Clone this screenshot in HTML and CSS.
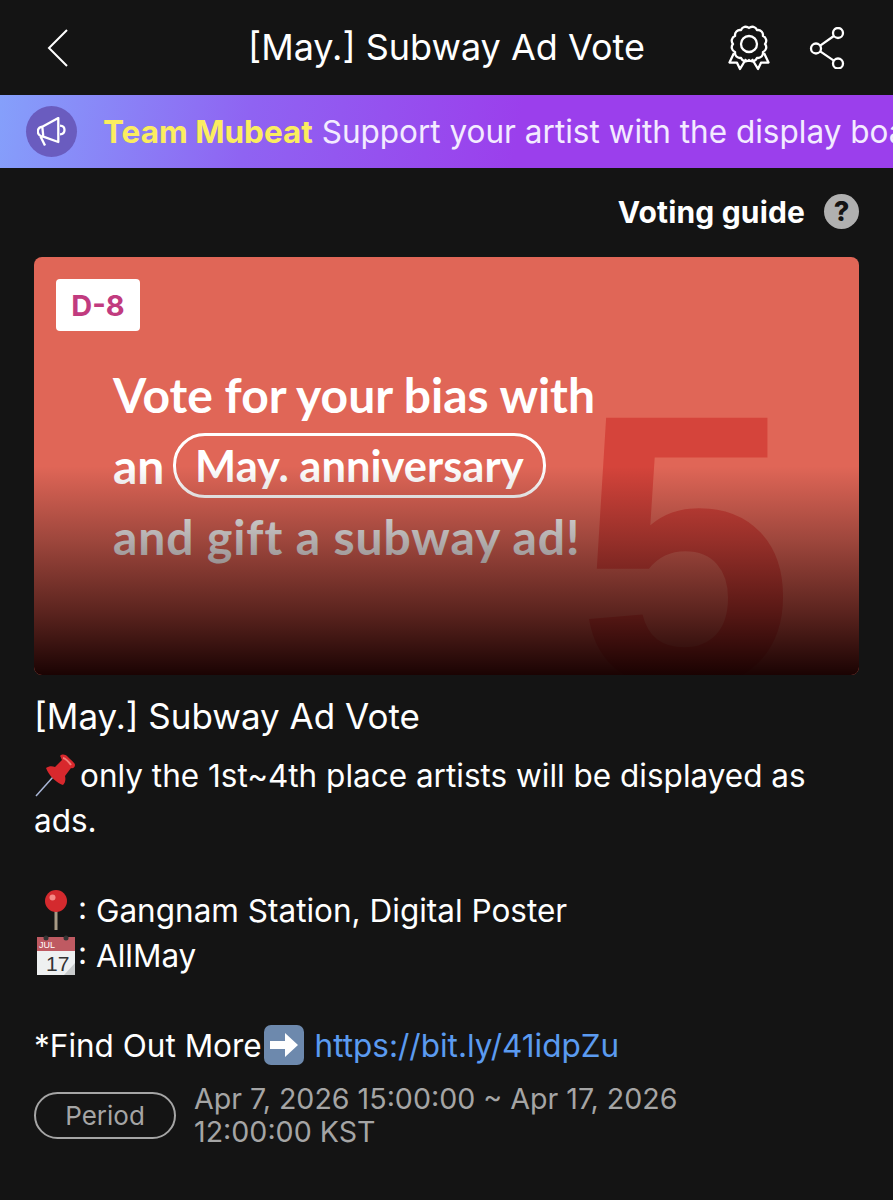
FILE: index.html
```html
<!DOCTYPE html>
<html lang="en">
<head>
    <meta charset="UTF-8">
    <meta name="viewport" content="width=device-width, initial-scale=1.0">
    <title>[May.] Subway Ad Vote</title>
    <link rel="stylesheet" href="styles.css">
</head>
<body>
    <div class="header">
        <svg class="back" width="24" height="40" viewBox="0 0 24 40"><path d="M21 2 3 20l18 18"/></svg>
        <h1 class="header-title">[May.] Subway Ad Vote</h1>
        <div class="header-icons">
            <svg class="badge-icon" width="42" height="46" viewBox="0 0 42 46">
                <path d="M21 3A5 5 0 0 1 29 5.100 5 5 0 0 1 34.900 11 5 5 0 0 1 37 19 5 5 0 0 1 34.900 27 5 5 0 0 1 29 32.900 5 5 0 0 1 21 35 5 5 0 0 1 13 32.900 5 5 0 0 1 7.100 27 5 5 0 0 1 5 19 5 5 0 0 1 7.100 11 5 5 0 0 1 13 5.100 5 5 0 0 1 21 3z"/>
                <circle cx="21" cy="19" r="8"/>
                <path d="M6 28 1.500 37.500l7.500.2 3 6.300 6-10M36 28l4.500 9.500-7.500.2-3 6.300-6-10"/>
            </svg>
            <svg class="share-icon" width="38" height="42" viewBox="0 0 38 42">
                <circle cx="30" cy="6" r="5"/>
                <circle cx="8" cy="21.500" r="5"/>
                <circle cx="30" cy="36.500" r="5"/>
                <path d="M12.200 18.600 25.800 9M12.200 24.400 25.800 33.600"/>
            </svg>
        </div>
    </div>

    <div class="notice">
        <span class="notice-circle">
            <svg width="30" height="30" viewBox="0 0 30 30"><path d="M5.300 9.700 21.300 1v24L6.300 19.700zM5.300 9.700C-.8 11-.8 18.500 6.300 19.700M3.500 19.500 8 28.500M23 8.700c6 .3 6 8.300 0 8.600"/></svg>
        </span>
        <p class="notice-text"><b>Team Mubeat</b> Support your artist with the display board</p>
    </div>

    <div class="guide">
        <span class="guide-label">Voting guide</span>
        <span class="guide-help">?</span>
    </div>

    <div class="banner">
        <span class="banner-five">5</span>
        <div class="banner-copy">
            <div>Vote for your bias with</div>
            <div class="banner-line">an <span class="pill">May. anniversary</span></div>
            <div class="banner-last">and gift a subway ad!</div>
        </div>
        <div class="banner-shade"></div>
        <span class="dday">D-8</span>
    </div>

    <div class="content">
        <h2 class="vote-title">[May.] Subway Ad Vote</h2>
        <p class="vote-line">
            <svg class="emoji pushpin" width="44" height="44" viewBox="0 0 44 44">
                <path d="M2 43 19 24" stroke="#a9b6d6" stroke-width="1.500"/>
                <path d="M26 3c2-2 5-2 8 1s7 6 7 8-2 4-4 3l-6 8c1 4 0 7-2 9-5-1-14-9-17-17 3-2 6-2 9-1l7-7c-1-2-1-3-2-4z" fill="#d8282d"/>
                <path d="M29 5c2 0 6 4 8 7" stroke="#f17c78" stroke-width="2" fill="none"/>
            </svg>only the 1st~4th place artists will be displayed as ads.
        </p>
        <p class="vote-line gap">
            <svg class="emoji" width="44" height="44" viewBox="0 0 44 44">
                <rect x="20.500" y="20" width="3" height="22" fill="#a89a85"/>
                <circle cx="22" cy="13" r="11" fill="#d42a2e"/>
                <circle cx="18.500" cy="9.500" r="3" fill="#f48a86"/>
            </svg>: Gangnam Station, Digital Poster<br>
            <svg class="emoji" width="44" height="44" viewBox="0 0 44 44">
                <rect x="3" y="4" width="38" height="38" fill="#eef0f1"/>
                <rect x="3" y="4" width="38" height="14" fill="#bf5a62"/>
                <circle cx="12" cy="5" r="2.500" fill="#333"/>
                <circle cx="32" cy="5" r="2.500" fill="#333"/>
                <text x="5" y="15" class="cal-month">JUL</text>
                <text x="12" y="38" class="cal-day">17</text>
                <path d="M41 30v12H30z" fill="#c9cccd"/>
            </svg>: AllMay
        </p>
        <p class="vote-line gap">*Find Out More<svg class="emoji arrow" width="44" height="44" viewBox="0 0 44 44">
                <rect x="2" y="2" width="40" height="40" rx="7" fill="#6d89ad"/>
                <path d="M8 18h15v-8l13 12-13 12v-8H8z" fill="#fff"/>
            </svg> <a class="link">https://bit.ly/41idpZu</a></p>
        <div class="period">
            <span class="period-tag">Period</span>
            <span class="period-dates">Apr 7, 2026 15:00:00 ~ Apr 17, 2026 12:00:00 KST</span>
        </div>
    </div>
</body>
</html>
```

FILE: styles.css
```css
body {
    font-family: Inter, 'Liberation Sans', sans-serif;
    margin: 0;
    padding: 0;
    height: 1200px;
    overflow: hidden;
    background-color: #141414;
    color: #fff;
}

/* top bar */
.header {
    height: 95px;
    display: grid;
    grid-template-columns: 1fr auto 1fr;
    align-items: center;
}

.back {
    margin-left: 46px;
    fill: none;
    stroke: #fff;
    stroke-width: 2;
}

.header-title {
    margin: 0 0 2px;
    font-size: 36px;
    font-weight: 400;
    text-align: center;
}

.header-icons {
    display: flex;
    align-items: center;
    justify-content: flex-end;
    gap: 38px;
    margin-right: 47px;
}

.badge-icon, .share-icon {
    fill: none;
    stroke: #fff;
    stroke-width: 2.300;
    stroke-linejoin: round;
}

/* notice strip */
.notice {
    height: 73px;
    display: flex;
    align-items: center;
    gap: 26px;
    padding-left: 26px;
    overflow: hidden;
    background: linear-gradient(100deg, #85a0fb 0%, #8f63f2 28%, #9b3fec 58%, #9b3fec 100%);
}

.notice-circle {
    flex: none;
    width: 51px;
    height: 51px;
    border-radius: 50%;
    background: #6a5cbf;
    display: flex;
    align-items: center;
    justify-content: center;
}

.notice-circle svg {
    fill: none;
    stroke: #fff;
    stroke-width: 2.300;
    stroke-linejoin: round;
}

.notice-text {
    margin: 0;
    font-size: 31.500px;
    white-space: nowrap;
    color: #f3ebff;
}

.notice-text b {
    color: #fbed5f;
    font-weight: 700;
}

/* guide */
.guide {
    height: 87px;
    padding-bottom: 2px;
    display: flex;
    align-items: center;
    justify-content: flex-end;
    gap: 19px;
    padding-right: 34px;
}

.guide-label {
    font-size: 30px;
    font-weight: 700;
    letter-spacing: 0.15px;
}

.guide-help {
    width: 35px;
    height: 35px;
    border-radius: 50%;
    background: #b0b0b0;
    color: #141414;
    font-size: 27px;
    font-weight: 800;
    display: flex;
    align-items: center;
    justify-content: center;
}

/* banner */
.banner {
    margin: 0 34px;
    height: 418px;
    border-radius: 8px;
    background: #e06657;
    position: relative;
    overflow: hidden;
}

.banner-five {
    position: absolute;
    left: 543px;
    top: 99px;
    height: 319px;
    overflow: hidden;
    font-family: 'Liberation Sans', sans-serif;
    font-size: 390px;
    line-height: 1;
    font-weight: 700;
    color: #d5443b;
}

.banner-shade {
    position: absolute;
    inset: 0;
    background: linear-gradient(180deg, rgba(20,5,5,0) 50%, rgba(20,5,5,0.33) 68%, rgba(20,0,0,0.65) 85%, rgba(20,0,0,0.97) 100%);
}

.dday {
    position: absolute;
    left: 22px;
    top: 22px;
    width: 84px;
    height: 52px;
    border-radius: 4px;
    background: #fff;
    color: #c13b7f;
    font-size: 29px;
    font-weight: 700;
    display: flex;
    align-items: center;
    justify-content: center;
}

.banner-copy {
    position: absolute;
    left: 79px;
    top: 102px;
    font-family: Lato, sans-serif;
    font-size: 48px;
    font-weight: 700;
    line-height: 71px;
    white-space: nowrap;
    color: #fff;
}

.banner-last {
    letter-spacing: 0.9px;
}

.pill {
    display: inline-block;
    margin-left: -3px;
    padding: 0 19px;
    height: 59px;
    line-height: 59px;
    border: 3px solid #fff;
    border-radius: 32px;
    font-size: 43.500px;
    vertical-align: top;
    margin-top: 3px;
}

/* text */
.content {
    padding: 0 34px;
}

.vote-title {
    margin: 21px 0 0;
    font-size: 35px;
    font-weight: 400;
    line-height: 40px;
}

.vote-line {
    margin: 17px 0 0;
    font-size: 31.500px;
    line-height: 45px;
}

.vote-line.gap {
    margin-top: 45px;
}

.emoji {
    width: 44px;
    height: 44px;
    vertical-align: -10px;
}

.pushpin {
    margin-right: 2px;
}

.cal-month {
    font-family: 'Liberation Sans', sans-serif;
    font-size: 9px;
    fill: #fff;
}

.cal-day {
    font-family: 'Liberation Sans', sans-serif;
    font-size: 21px;
    fill: #333;
}

.link {
    color: #5b9bf0;
}

.period {
    display: flex;
    align-items: center;
    gap: 18px;
    margin-top: 14px;
}

.period-tag {
    flex: none;
    width: 142px;
    height: 47px;
    box-sizing: border-box;
    border: 2px solid #a5a5a5;
    border-radius: 24px;
    color: #a5a5a5;
    font-size: 26px;
    display: flex;
    align-items: center;
    justify-content: center;
}

.period-dates {
    width: 520px;
    color: #a5a5a5;
    font-size: 28.600px;
    line-height: 33px;
}
```
